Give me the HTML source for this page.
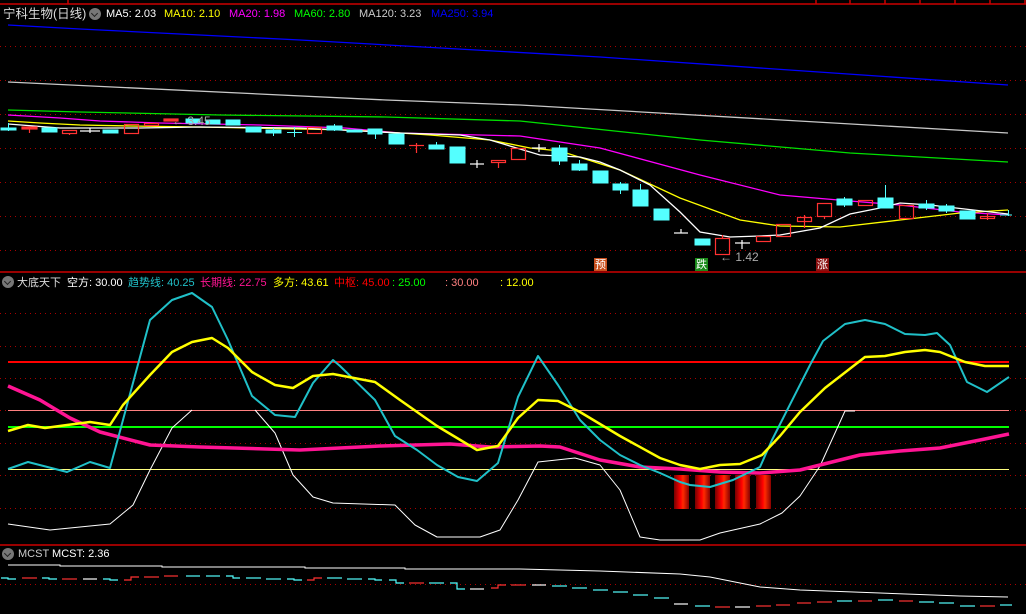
<!DOCTYPE html>
<html><head><meta charset="utf-8"><style>
html,body{margin:0;padding:0;background:#000;width:1026px;height:614px;overflow:hidden}
.t{position:absolute;font-family:"Liberation Sans","Noto Sans CJK SC",sans-serif;font-size:11px;line-height:14px;white-space:nowrap}
.c{position:absolute;width:12px;height:12px;border-radius:50%;background:#777}
.c:after{content:"";position:absolute;left:3px;top:3px;width:4px;height:4px;border-right:1.5px solid #222;border-bottom:1.5px solid #222;transform:rotate(45deg)}
.tag{position:absolute;font-family:"Noto Sans CJK SC",sans-serif;font-size:11px;line-height:13px;color:#fff;width:13px;text-align:center}
</style></head><body>
<svg width="1026" height="614" style="position:absolute;left:0;top:0" xmlns="http://www.w3.org/2000/svg">
<g stroke="#a00" stroke-width="1" stroke-dasharray="1,4">
<line x1="0" y1="46.5" x2="1026" y2="46.5"/><line x1="0" y1="80.5" x2="1026" y2="80.5"/><line x1="0" y1="114.5" x2="1026" y2="114.5"/><line x1="0" y1="148.5" x2="1026" y2="148.5"/><line x1="0" y1="182.5" x2="1026" y2="182.5"/><line x1="0" y1="216.5" x2="1026" y2="216.5"/><line x1="0" y1="250.5" x2="1026" y2="250.5"/>
<line x1="0" y1="313.5" x2="1026" y2="313.5"/><line x1="0" y1="346.5" x2="1026" y2="346.5"/><line x1="0" y1="378.5" x2="1026" y2="378.5"/><line x1="0" y1="410.5" x2="1026" y2="410.5"/><line x1="0" y1="443.5" x2="1026" y2="443.5"/><line x1="0" y1="475.5" x2="1026" y2="475.5"/><line x1="0" y1="508.5" x2="1026" y2="508.5"/>
<line x1="0" y1="584.5" x2="1026" y2="584.5"/>
</g>
<g stroke="#c00" stroke-width="1.5"><line x1="0" y1="4" x2="1026" y2="4"/><line x1="0" y1="272" x2="1026" y2="272"/><line x1="0" y1="545" x2="1026" y2="545"/>
<line x1="68" y1="0" x2="68" y2="4"/><line x1="816" y1="0" x2="816" y2="4"/><line x1="850" y1="0" x2="850" y2="4"/><line x1="885" y1="0" x2="885" y2="4"/><line x1="920" y1="0" x2="920" y2="4"/><line x1="955" y1="0" x2="955" y2="4"/><line x1="990" y1="0" x2="990" y2="4"/><line x1="1025" y1="0" x2="1025" y2="4"/></g>
<g fill="none" stroke-width="1.3">
<polyline stroke="#0000ff" points="8,25 80,29 300,40 600,57 1008,85"/>
<polyline stroke="#c8c8c8" points="8,82 386,100 520,105 1008,133"/>
<polyline stroke="#00e000" points="8,110 80,112 220,115 386,117 520,121 700,140 850,153 1008,162"/>
<polyline stroke="#ff00ff" points="8,115 60,118 100,121 160,123 260,125 345,128 400,133 520,136 560,142 600,148 700,175 780,195 850,201 900,205 960,212 1008,215"/>
<polyline stroke="#ffff00" points="8,121 40,123 80,125 130,126 200,127 250,128 350,130 400,133 430,135 490,140 530,148 560,151 620,170 680,198 740,220 780,226 840,227 900,220 960,213 1008,210"/>
<polyline stroke="#fff" points="8,124 60,128 140,128 200,127 300,128 360,131 400,133 460,135 490,140 540,155 580,157 600,162 620,170 650,185 680,212 700,232 730,237 760,236 780,235 820,228 850,214 880,208 900,203 930,205 1008,214"/>
</g>
<g fill="#54ffff" stroke="#54ffff" stroke-width="1">
<rect x="1" y="128" width="15" height="2"/><line x1="8.5" y1="123" x2="8.5" y2="131"/>
<rect x="42" y="128" width="15" height="4"/>
<rect x="103" y="130" width="15" height="3"/>
<rect x="186" y="119" width="14" height="4"/>
<rect x="206" y="120" width="14" height="4"/>
<rect x="226" y="120" width="14" height="5"/>
<rect x="246" y="127" width="15" height="5"/>
<rect x="266" y="130" width="15" height="3"/><line x1="273.5" y1="128" x2="273.5" y2="136"/>
<line x1="287" y1="132.5" x2="302" y2="132.5"/><line x1="294.5" y1="127" x2="294.5" y2="137"/>
<rect x="327" y="126" width="15" height="4"/><line x1="334.5" y1="124" x2="334.5" y2="131"/>
<rect x="347" y="130" width="15" height="2"/>
<rect x="368" y="129" width="14" height="5"/><line x1="375.5" y1="129" x2="375.5" y2="139"/>
<rect x="389" y="134" width="15" height="10"/>
<rect x="429" y="145" width="15" height="4"/><line x1="436.5" y1="142" x2="436.5" y2="149"/>
<rect x="450" y="147" width="15" height="16"/>
<rect x="552" y="148" width="15" height="13"/><line x1="559.5" y1="145" x2="559.5" y2="165"/>
<rect x="572" y="164" width="15" height="6"/><line x1="579.5" y1="160" x2="579.5" y2="171"/>
<rect x="593" y="171" width="15" height="12"/>
<rect x="613" y="184" width="15" height="6"/><line x1="620.5" y1="182" x2="620.5" y2="194"/>
<rect x="633" y="190" width="15" height="16"/><line x1="640.5" y1="184" x2="640.5" y2="206"/>
<rect x="654" y="209" width="15" height="11"/>
<rect x="695" y="239" width="15" height="6"/>
<rect x="837" y="199" width="15" height="6"/><line x1="844.5" y1="197" x2="844.5" y2="207"/>
<rect x="878" y="198" width="15" height="10"/><line x1="885.5" y1="185" x2="885.5" y2="198"/>
<rect x="919" y="204" width="15" height="4"/><line x1="926.5" y1="200" x2="926.5" y2="210"/>
<rect x="939" y="206" width="15" height="5"/><line x1="946.5" y1="204" x2="946.5" y2="213"/>
<rect x="960" y="211" width="15" height="8"/>
<line x1="1000" y1="215" x2="1012" y2="215"/><line x1="1008.5" y1="210" x2="1008.5" y2="216"/>
</g>
<g fill="none" stroke="#ff3232" stroke-width="1.2">
<rect x="22" y="127" width="15" height="2" fill="#ff3232"/><line x1="29.5" y1="129" x2="29.5" y2="133"/>
<rect x="62.5" y="130.5" width="14" height="3"/><line x1="69.5" y1="134" x2="69.5" y2="135"/>
<rect x="124.5" y="124.5" width="14" height="9"/>
<rect x="144.5" y="123.5" width="14" height="2"/>
<rect x="164" y="119" width="14" height="2" fill="#ff3232"/>
<rect x="307.5" y="127.5" width="14" height="6"/>
<line x1="409" y1="145.5" x2="424" y2="145.5"/><line x1="416.5" y1="143" x2="416.5" y2="153"/>
<rect x="491.5" y="160.5" width="14" height="2"/><line x1="498.5" y1="163" x2="498.5" y2="168"/>
<rect x="511.5" y="148.5" width="14" height="11"/>
<rect x="715.5" y="238.5" width="14" height="16"/><line x1="722.5" y1="235" x2="722.5" y2="238"/>
<rect x="756.5" y="236.5" width="14" height="5"/>
<rect x="776.5" y="224.5" width="14" height="12"/>
<rect x="797.5" y="217.5" width="14" height="4"/><line x1="804.5" y1="215" x2="804.5" y2="228"/>
<rect x="817.5" y="203.5" width="14" height="13"/><line x1="824.5" y1="217" x2="824.5" y2="219"/>
<rect x="858.5" y="200.5" width="14" height="5"/>
<rect x="899.5" y="205.5" width="14" height="13"/>
<rect x="980.5" y="216.5" width="14" height="2"/><line x1="987.5" y1="213" x2="987.5" y2="220"/>
</g>
<g stroke="#fff" stroke-width="1.2">
<line x1="80" y1="131" x2="100" y2="131"/><line x1="90" y1="128" x2="90" y2="133"/>
<line x1="470" y1="164" x2="484" y2="164"/><line x1="477" y1="160" x2="477" y2="168"/>
<line x1="532" y1="148" x2="546" y2="148"/><line x1="539" y1="144" x2="539" y2="152"/>
<line x1="674" y1="233" x2="688" y2="233"/><line x1="681" y1="229" x2="681" y2="233"/>
<line x1="735" y1="243" x2="750" y2="243"/><line x1="742" y1="240" x2="742" y2="249"/>
</g>
<text x="172" y="125" font-family="Liberation Sans" font-size="12" fill="#aaa">← 3.45</text>
<text x="720" y="261" font-family="Liberation Sans" font-size="12" fill="#aaa">← 1.42</text>
<g stroke-width="1.5">
<line x1="8" y1="362" x2="1009" y2="362" stroke="#ff0000" stroke-width="2"/>
<line x1="8" y1="410.5" x2="1009" y2="410.5" stroke="#ff8080" stroke-width="1"/>
<line x1="8" y1="427" x2="1009" y2="427" stroke="#00ff00" stroke-width="2"/>
<line x1="8" y1="469.5" x2="1009" y2="469.5" stroke="#ffff80" stroke-width="1"/>
</g>
<defs><linearGradient id="bar" x1="0" x2="1"><stop offset="0" stop-color="#700"/><stop offset=".45" stop-color="#f00"/><stop offset=".6" stop-color="#ff2a00"/><stop offset="1" stop-color="#800"/></linearGradient></defs>
<g fill="url(#bar)"><rect x="674" y="475" width="15" height="34"/><rect x="695" y="475" width="15" height="34"/><rect x="715" y="475" width="15" height="34"/><rect x="735" y="475" width="15" height="34"/><rect x="756" y="475" width="15" height="34"/></g>
<g fill="none" stroke-linejoin="round">
<polyline stroke="#fff" stroke-width="1" points="8,524 50,530 110,524 133,505 150,470 172,428 192,410"/>
<polyline stroke="#fff" stroke-width="1" points="255,410 275,433 293,475 313,497 333,503 395,505 415,525 437,537 480,537 500,530 518,500 538,462 575,458 600,465 620,490 640,537 660,540 700,540 720,533 760,524 782,513 800,496 820,466 845,411 855,411"/>
<polyline stroke="#ff1493" stroke-width="3.5" points="8,386 40,400 70,418 100,432 150,445 200,447 300,450 380,446 450,444 490,447 540,446 560,447 600,460 640,467 680,469 720,472 760,473 800,470 860,455 900,451 940,448 980,440 1009,434"/>
<polyline stroke="#20c0c8" stroke-width="2" points="8,469 28,462 67,472 90,462 110,468 150,320 172,300 192,293 212,307 228,340 252,396 275,415 295,417 313,383 333,360 340,366 375,400 395,436 417,450 437,465 458,477 477,481 498,463 518,397 538,356 558,385 580,420 600,440 620,455 640,465 660,473 680,482 690,485 710,487 733,480 760,467 772,440 810,365 823,341 845,324 865,320 885,324 905,334 925,335 937,333 950,345 967,382 987,392 1009,377"/>
<polyline stroke="#ffff00" stroke-width="2.5" points="8,431 28,425 45,428 67,425 90,422 110,425 123,405 150,375 172,352 192,342 212,338 228,348 252,372 275,385 293,388 313,376 333,374 375,382 400,400 437,426 477,450 498,446 518,418 538,400 558,401 580,412 620,436 660,458 680,465 700,469 720,465 740,464 762,455 780,436 800,412 825,388 865,357 885,356 905,352 925,350 940,352 965,362 985,366 1009,366"/>
</g>
<polyline fill="none" stroke="#fff" stroke-width="1" points="8,565 60,565 60,566 162,566 162,567 305,567 305,568 405,568 405,569 520,569 600,571 680,574 710,577 760,587 800,590 880,593 960,596 1008,597"/>
<g stroke-width="1.2" fill="none">
<polyline stroke="#54ffff" points="1,578 8,578 8,579 16,579"/><polyline stroke="#ff3232" points="22,578 37,578"/><polyline stroke="#54ffff" points="42,578 49,578 49,579 57,579"/><polyline stroke="#ff3232" points="62,579 77,579"/><polyline stroke="#fff" points="83,579 97,579"/><polyline stroke="#54ffff" points="103,579 110,579 110,580 118,580"/><polyline stroke="#ff3232" points="124,580 131,580 131,577 139,577"/><polyline stroke="#ff3232" points="144,577 159,577"/><polyline stroke="#ff3232" points="164,576 178,576"/><polyline stroke="#54ffff" points="186,576 200,576"/><polyline stroke="#54ffff" points="206,576 220,576"/><polyline stroke="#54ffff" points="226,576 233,576 233,578 240,578"/><polyline stroke="#54ffff" points="246,578 261,578"/><polyline stroke="#54ffff" points="266,579 281,579"/><polyline stroke="#54ffff" points="287,579 294,579 294,580 302,580"/><polyline stroke="#ff3232" points="307,580 314,580 314,578 322,578"/><polyline stroke="#54ffff" points="327,578 342,578"/><polyline stroke="#54ffff" points="347,579 362,579"/><polyline stroke="#54ffff" points="368,579 375,579 375,580 382,580"/><polyline stroke="#54ffff" points="389,580 396,580 396,583 404,583"/><polyline stroke="#ff3232" points="409,583 424,583"/><polyline stroke="#54ffff" points="429,583 444,583"/><polyline stroke="#54ffff" points="450,583 457,583 457,589 465,589"/><polyline stroke="#fff" points="470,589 484,589"/><polyline stroke="#ff3232" points="491,588 498,588 498,585 506,585"/><polyline stroke="#ff3232" points="511,585 526,585"/><polyline stroke="#fff" points="532,585 546,585"/><polyline stroke="#54ffff" points="552,586 567,586"/><polyline stroke="#54ffff" points="572,588 587,588"/><polyline stroke="#54ffff" points="593,590 608,590"/><polyline stroke="#54ffff" points="613,592 628,592"/><polyline stroke="#54ffff" points="633,595 648,595"/><polyline stroke="#54ffff" points="654,598 669,598"/><polyline stroke="#fff" points="674,604 688,604"/><polyline stroke="#54ffff" points="695,606 710,606"/><polyline stroke="#ff3232" points="715,607 730,607"/><polyline stroke="#fff" points="735,607 750,607"/><polyline stroke="#ff3232" points="756,606 771,606"/><polyline stroke="#ff3232" points="776,605 790,605"/><polyline stroke="#ff3232" points="797,603 811,603"/><polyline stroke="#ff3232" points="817,602 832,602"/><polyline stroke="#54ffff" points="837,601 852,601"/><polyline stroke="#ff3232" points="858,601 872,601"/><polyline stroke="#54ffff" points="878,600 893,600"/><polyline stroke="#ff3232" points="899,601 913,601"/><polyline stroke="#54ffff" points="919,602 934,602"/><polyline stroke="#54ffff" points="939,603 954,603"/><polyline stroke="#54ffff" points="960,606 975,606"/><polyline stroke="#ff3232" points="980,606 995,606"/><polyline stroke="#54ffff" points="1000,605 1012,605"/>
</g>
</svg>
<div class="tag" style="left:594px;top:258px;background:#c8501e">预</div>
<div class="tag" style="left:695px;top:258px;background:#1a8a1a">跌</div>
<div class="tag" style="left:816px;top:258px;background:#8a1010">涨</div>

<div class="t" style="left:3px;top:7px;color:#ddd;font-size:12.5px">宁科生物(日线)</div>
<div class="c" style="left:89px;top:8px"></div>
<div class="t" style="left:106px;top:7px;color:#fff">MA5: 2.03</div>
<div class="t" style="left:164px;top:7px;color:#ff0">MA10: 2.10</div>
<div class="t" style="left:229px;top:7px;color:#f0f">MA20: 1.98</div>
<div class="t" style="left:294px;top:7px;color:#0f0">MA60: 2.80</div>
<div class="t" style="left:359px;top:7px;color:#ccc">MA120: 3.23</div>
<div class="t" style="left:431px;top:7px;color:#00f">MA250: 3.94</div>

<div class="c" style="left:2px;top:276px"></div>
<div class="t" style="left:17px;top:276px;color:#ddd">大底天下</div>
<div class="t" style="left:67px;top:276px;color:#fff">空方: 30.00</div>
<div class="t" style="left:128px;top:276px;color:#20c0c8">趋势线: 40.25</div>
<div class="t" style="left:200px;top:276px;color:#ff1493">长期线: 22.75</div>
<div class="t" style="left:273px;top:276px;color:#ff0">多方: 43.61</div>
<div class="t" style="left:334px;top:276px;color:#f00">中枢: 45.00</div>
<div class="t" style="left:392px;top:276px;color:#0f0">: 25.00</div>
<div class="t" style="left:445px;top:276px;color:#ff8080">: 30.00</div>
<div class="t" style="left:500px;top:276px;color:#ff0">: 12.00</div>

<div class="c" style="left:2px;top:548px"></div>
<div class="t" style="left:18px;top:547px;color:#ccc">MCST <span style="color:#fff">MCST: 2.36</span></div>
</body></html>
